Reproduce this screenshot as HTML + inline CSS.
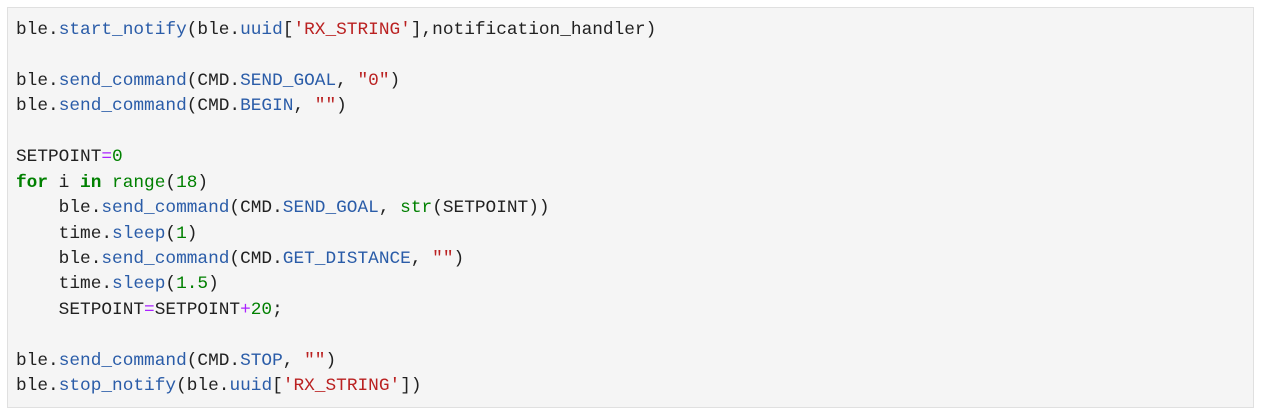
<!DOCTYPE html>
<html><head><style>
body{margin:0;background:#fff;width:1264px;height:417px;overflow:hidden}
.box{position:absolute;left:7px;top:7px;width:1245px;height:399px;background:#f5f5f5;border:1px solid #e0e0e0}
pre{margin:0;position:absolute;left:8px;top:10px;font-family:"Liberation Mono",monospace;font-size:17.8px;line-height:25.43px;color:#212121}
.a{color:#2a5ca8}.s{color:#ba2121}.n{color:#008000}.k{color:#008000;font-weight:bold}.o{color:#aa22ff}
</style></head><body><div class="box"><pre>ble.<span class="a">start_notify</span>(ble.<span class="a">uuid</span>[<span class="s">'RX_STRING'</span>],notification_handler)

ble.<span class="a">send_command</span>(CMD.<span class="a">SEND_GOAL</span>, <span class="s">"0"</span>)
ble.<span class="a">send_command</span>(CMD.<span class="a">BEGIN</span>, <span class="s">""</span>)

SETPOINT<span class="o">=</span><span class="n">0</span>
<span class="k">for</span> i <span class="k">in</span> <span class="n">range</span>(<span class="n">18</span>)
    ble.<span class="a">send_command</span>(CMD.<span class="a">SEND_GOAL</span>, <span class="n">str</span>(SETPOINT))
    time.<span class="a">sleep</span>(<span class="n">1</span>)
    ble.<span class="a">send_command</span>(CMD.<span class="a">GET_DISTANCE</span>, <span class="s">""</span>)
    time.<span class="a">sleep</span>(<span class="n">1.5</span>)
    SETPOINT<span class="o">=</span>SETPOINT<span class="o">+</span><span class="n">20</span>;

ble.<span class="a">send_command</span>(CMD.<span class="a">STOP</span>, <span class="s">""</span>)
ble.<span class="a">stop_notify</span>(ble.<span class="a">uuid</span>[<span class="s">'RX_STRING'</span>])</pre></div></body></html>
